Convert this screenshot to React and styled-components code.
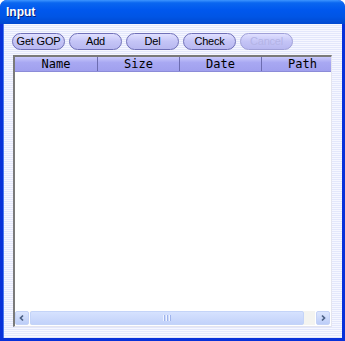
import React from "react";
import styled, { createGlobalStyle } from "styled-components";

const GlobalStyle = createGlobalStyle`
  html, body {
    margin: 0;
    padding: 0;
    background: #ffffff;
  }
  #root {
    width: 345px;
    height: 341px;
  }
`;

const columns = [
  { name: "Name", width: 83 },
  { name: "Size", width: 82 },
  { name: "Date", width: 82 },
  { name: "Path", width: 82 },
];

const buttons = [
  { label: "Get GOP" },
  { label: "Add" },
  { label: "Del" },
  { label: "Check" },
  { label: "Cancel", disabled: true },
];

const Window = styled.div`
  width: 345px;
  height: 341px;
  box-sizing: border-box;
  display: flex;
  flex-direction: column;
  background: #0831d9;
  border-radius: 7px 7px 0 0;
  overflow: hidden;
  font-family: "Liberation Sans", Arial, sans-serif;
`;

const TitleBar = styled.div`
  height: 24px;
  flex: none;
  display: flex;
  align-items: center;
  padding-left: 6px;
  background: linear-gradient(
    to bottom,
    #3d95ff 0%,
    #0a66f0 12%,
    #0058ee 40%,
    #0055e5 70%,
    #0048d0 100%
  );
  color: #ffffff;
  font-weight: bold;
  font-size: 12px;
  text-shadow: 1px 1px 0 #0a1e7a;
`;

const Client = styled.div`
  flex: 1;
  margin: 0 3px 3px 3px;
  border-left: 1px solid #4a78f0;
  display: flex;
  flex-direction: column;
  padding: 9px 9px 11px 9px;
  background: repeating-linear-gradient(
    to bottom,
    #f6f7ff 0px,
    #f6f7ff 1px,
    #e3e7fb 1px,
    #e3e7fb 2px
  );
`;

const Toolbar = styled.div`
  display: flex;
  gap: 4px;
  height: 17px;
  margin: 0 0 5px -1px;
`;

const PillButton = styled.div`
  width: 53px;
  height: 17px;
  box-sizing: border-box;
  border: 1px solid #7070b8;
  border-radius: 9px;
  background: linear-gradient(to bottom, #e0e0ff 0%, #c4c4f6 50%, #b8b8f0 100%);
  color: ${(p) => (p.$disabled ? "#b4b4e6" : "#000000")};
  border-color: ${(p) => (p.$disabled ? "#a0a0d8" : "#7070b8")};
  font-size: 11px;
  letter-spacing: -0.2px;
  display: flex;
  align-items: center;
  justify-content: center;
  line-height: 1;
  white-space: nowrap;
`;

const ListView = styled.div`
  flex: 1;
  display: flex;
  flex-direction: column;
  width: 319px;
  box-sizing: border-box;
  border-top: 2px solid #7a7a7a;
  border-left: 2px solid #7a7a7a;
  border-right: 1px solid #e4e4ee;
  border-bottom: 1px solid #e4e4ee;
  background: #ffffff;
`;

const Header = styled.div`
  display: flex;
  height: 14px;
  overflow: hidden;
  background: linear-gradient(to bottom, #c8c8fc 0%, #a8a8f2 40%, #a0a0ee 100%);
  border-bottom: 1px solid #8c8cd8;
`;

const HeaderCell = styled.div`
  flex: none;
  width: ${(p) => p.$w}px;
  box-sizing: border-box;
  border-right: 1px solid #6c6cb0;
  text-align: center;
  font-family: "DejaVu Sans Mono", "Liberation Mono", monospace;
  font-size: 12px;
  line-height: 14px;
  color: #000000;
`;

const Rows = styled.div`
  flex: 1;
`;

const ScrollBar = styled.div`
  height: 14px;
  display: flex;
  gap: 1px;
  padding: 0 1px 1px 0;
  background: #ffffff;
`;

const ArrowButton = styled.div`
  width: 14px;
  height: 14px;
  box-sizing: border-box;
  border-radius: 2px;
  background: linear-gradient(to bottom, #dce6fe 0%, #bccdf8 100%);
  border: 1px solid #c4d2f6;
  display: flex;
  align-items: center;
  justify-content: center;
`;

const Track = styled.div`
  flex: 1;
  display: flex;
  background: #f4f4f0;
  padding-right: 11px;
`;

const Thumb = styled.div`
  flex: 1;
  border-radius: 2px;
  border: 1px solid #c4d4f8;
  background: linear-gradient(to bottom, #d6e2fe 0%, #c2d2fa 100%);
  display: flex;
  align-items: center;
  justify-content: center;
  gap: 1px;
`;

const Grip = styled.span`
  width: 1px;
  height: 6px;
  background: #eef3ff;
  box-shadow: 1px 0 0 #9fb4ec;
  margin-right: 1px;
`;

const Arrow = ({ dir }) => (
  <svg width="8" height="8" viewBox="0 0 8 8">
    <path
      d={dir === "left" ? "M5 1.5 L2.5 4 L5 6.5" : "M3 1.5 L5.5 4 L3 6.5"}
      fill="none"
      stroke="#4d6185"
      strokeWidth="1.7"
    />
  </svg>
);

export default function App() {
  return (
    <>
      <GlobalStyle />
      <Window>
        <TitleBar>Input</TitleBar>
        <Client>
          <Toolbar>
            {buttons.map((b) => (
              <PillButton key={b.label} $disabled={b.disabled}>
                {b.label}
              </PillButton>
            ))}
          </Toolbar>
          <ListView>
            <Header>
              {columns.map((c) => (
                <HeaderCell key={c.name} $w={c.width}>
                  {c.name}
                </HeaderCell>
              ))}
            </Header>
            <Rows />
            <ScrollBar>
              <ArrowButton>
                <Arrow dir="left" />
              </ArrowButton>
              <Track>
                <Thumb>
                  <Grip />
                  <Grip />
                  <Grip />
                </Thumb>
              </Track>
              <ArrowButton>
                <Arrow dir="right" />
              </ArrowButton>
            </ScrollBar>
          </ListView>
        </Client>
      </Window>
    </>
  );
}
